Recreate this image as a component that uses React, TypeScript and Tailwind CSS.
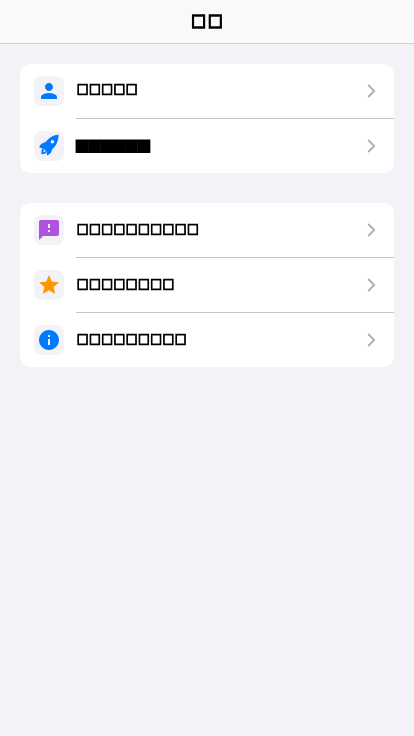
import type { ReactNode } from 'react';
import { MdPerson, MdFeedback, MdStar, MdInfo } from 'react-icons/md';

function Rocket() {
  return (
    <svg className="size-6 shrink-0" viewBox="0 0 24 24" fill="#007aff">
      <path
        fillRule="evenodd"
        d="M21.6 0.7C17.8 0.9 13.6 2.1 10.9 5.6C10.1 6.5 9.4 7.4 8.7 8C5.8 8.6 3 10.3 2.2 13.5L5.6 14.4C7 14.8 9.3 16.7 9.5 18L10 21.6C12.8 20.6 14.9 18.4 14.9 15.6C15.7 14.9 16.6 14 17.4 13.1C20.3 9.8 21.5 4.8 21.6 0.7ZM15.4 5.9A1.8 1.8 0 1 1 15.4 9.5A1.8 1.8 0 0 1 15.4 5.9Z"
      />
      <path d="M5.9 14.6C4.4 15.4 4.2 17.6 4.5 20.2C6.9 20.3 9 20 9.4 17.8L8.1 17.1C7.8 18 7.2 18.3 6.2 18.4C6.2 17.4 6.5 16.7 7.4 16Z" />
    </svg>
  );
}

function Row({ icon, children, last = false }: { icon: ReactNode; children: ReactNode; last?: boolean }) {
  return (
    <div className="flex pl-[14px]">
      <div className="flex h-[54px] w-[42px] shrink-0 items-center">
        <div className="flex size-[30px] items-center justify-center rounded-[8px] bg-[#f2f2f7]">{icon}</div>
      </div>
      <div className={`flex min-w-0 grow items-center justify-between pr-[18px] ${last ? 'h-[54px]' : 'h-[55px] border-b border-[#c6c6c8]'}`}>
        {children}
        <svg className="h-[14px] w-[9px]" viewBox="0 0 9 14" fill="none" stroke="#aeaeb2" strokeWidth="1.8">
          <path d="M1.2 1L7.2 7L1.2 13" />
        </svg>
      </div>
    </div>
  );
}

function Label({ text }: { text: string }) {
  return (
    <span className="mb-[2px] inline-block translate-y-[-0.9px] scale-y-[1.1] pl-[0.8px] font-['DejaVu_Sans',sans-serif] text-[12.2px] leading-[20px] tracking-[0.72px] text-black will-change-transform [-webkit-text-stroke:0.95px_black]">
      {text}
    </span>
  );
}

export default function App() {
  return (
    <div className="min-h-[736px] w-full bg-[#f2f2f7] antialiased">
      <header className="flex h-[44px] items-center justify-center border-b border-[#d2d2d3] bg-[#f9f9f9]">
        <h1 className="mb-[2px] ml-[1.8px] translate-y-[-0.6px] scale-y-[1.1] font-['DejaVu_Sans',sans-serif] text-[15.4px] leading-[20px] tracking-[2.2px] text-black will-change-transform [-webkit-text-stroke:1.3px_black]">□□</h1>
      </header>
      <main className="flex flex-col gap-[30px] px-5 pt-5">
        <section className="overflow-hidden rounded-[10px] bg-white">
          <Row icon={<MdPerson className="size-6 shrink-0 text-[#007aff]" />}>
            <Label text="□□□□□" />
          </Row>
          <Row last icon={<Rocket />}>
            <span className="inline-block scale-y-[1.06] font-['DejaVu_Sans',sans-serif] text-[13px] leading-[20px] tracking-[0.1px] text-black will-change-transform [-webkit-text-stroke:2.9px_black]">■■■■■■</span>
          </Row>
        </section>
        <section className="overflow-hidden rounded-[10px] bg-white">
          <Row icon={<MdFeedback className="size-6 shrink-0 text-[#af52de]" />}>
            <Label text="□□□□□□□□□□" />
          </Row>
          <Row icon={<MdStar className="size-6 shrink-0 text-[#ff9500]" />}>
            <Label text="□□□□□□□□" />
          </Row>
          <Row last icon={<MdInfo className="size-6 shrink-0 text-[#007aff]" />}>
            <Label text="□□□□□□□□□" />
          </Row>
        </section>
      </main>
    </div>
  );
}
